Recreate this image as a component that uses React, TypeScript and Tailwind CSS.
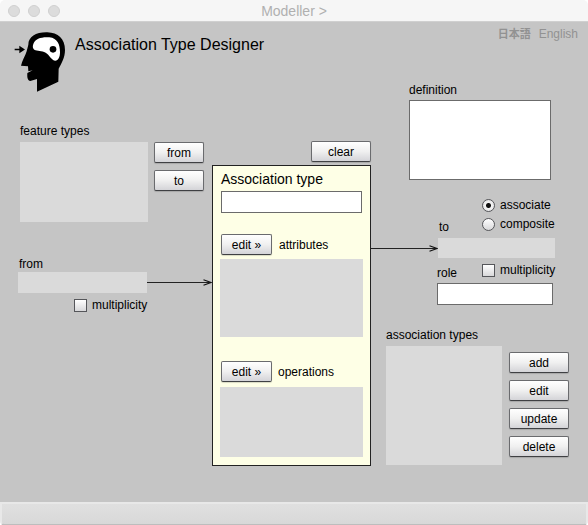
import React from "react";
import { clsx } from "clsx";

function Button({ children, className }: { children: React.ReactNode; className?: string }) {
  return (
    <button
      type="button"
      className={clsx(
        "h-[21px] shrink-0 rounded-xs border border-[#6a6b6e] border-b-[#3f4043] bg-linear-to-b from-white from-0% via-[#f0f0f0] via-50% to-[#d4d4d8] pt-px text-center leading-[18px] shadow-[0_1px_1px_rgba(0,0,0,0.15)]",
        className,
      )}
    >
      {children}
    </button>
  );
}

function ListBox({ id, className }: { id: string; className?: string }) {
  return (
    <select
      id={id}
      multiple
      disabled
      className={clsx("block min-w-0 appearance-none border-0 bg-[#dadada] p-0 opacity-100", className)}
    />
  );
}

function Choice({
  type,
  label,
  name,
  defaultChecked,
}: {
  type: "checkbox" | "radio";
  label: string;
  name?: string;
  defaultChecked?: boolean;
}) {
  return (
    <label className="flex h-4 items-center gap-[5px]">
      <input
        type={type}
        name={name}
        defaultChecked={defaultChecked}
        className={clsx(
          "size-[13px] shrink-0 appearance-none border border-[#55565a] bg-linear-to-b from-white to-[#d8d8da]",
          type === "radio" &&
            "rounded-full checked:bg-[radial-gradient(circle,#111_0,#111_2px,#f4f4f4_3px,#e4e4e6_6px)]",
          type === "checkbox" && "checked:from-[#555] checked:to-[#333]",
        )}
      />
      <span>{label}</span>
    </label>
  );
}

function Arrow({ className }: { className?: string }) {
  return (
    <div aria-hidden="true" className={clsx("flex items-center", className)}>
      <div className="h-px flex-1 bg-[#222]" />
      <svg viewBox="0 0 9 7" className="-ml-2 h-[7px] w-[9px]" fill="none" stroke="#111" strokeWidth="1.2">
        <path d="M0.5 0.7 L8 3.5 L0.5 6.3" />
      </svg>
    </div>
  );
}

function HeadLogo() {
  return (
    <svg viewBox="18 21 156 186" className="h-[62px] w-[52px] shrink-0" role="img" aria-label="Modeller">
      <path d="M61 62C61 38 85 24 118 25C150 26 171 44 171 78C171 101 160 119 152 134L151 173L87 203V165L67 171C59 169 57 162 58 147L74 139L61 142L60 127L39 125C42 110 52 96 56 82Z" />
      <path
        fill="#fff"
        d="M77 58C81 44 102 38 124 40C149 43 156 62 156 84C156 101 150 111 141 110C128 107 125 92 113 86C101 79 88 81 79 77C73 73 74 64 77 58Z"
      />
      <circle cx="135" cy="76" r="10" />
      <path d="M20 74H34V65L51 76.500L34 88V79H20Z" />
    </svg>
  );
}

function Designer() {
  return (
    <main className="grid flex-1 grid-cols-[minmax(0,212fr)_minmax(0,159fr)_minmax(0,217fr)] grid-rows-[101px_auto] content-start bg-[#c5c5c5] pb-9">
      <header className="col-span-2 flex items-start gap-[9px] pt-[9px] pl-[14px]">
        <HeadLogo />
        <h1 className="mt-1 text-base leading-5">Association Type Designer</h1>
      </header>

      <section className="col-start-1 row-start-2">
        <div className="pr-2 pl-5">
          <label htmlFor="features" className="block">feature types</label>
          <div className="mt-[3px] flex gap-[6px]">
            <ListBox id="features" className="h-20 flex-1" />
            <div className="flex flex-col gap-[7px]">
              <Button className="w-[50px]">from</Button>
              <Button className="w-[50px]">to</Button>
            </div>
          </div>
        </div>
        <div className="mt-[34px] pl-[18px]">
          <label htmlFor="from" className="block pl-px">from</label>
          <div className="flex">
            <input id="from" readOnly className="h-[21px] w-2/3 bg-[#dadada]" />
            <Arrow className="flex-1" />
          </div>
          <div className="mt-1 flex w-2/3 justify-end">
            <Choice type="checkbox" label="multiplicity" />
          </div>
        </div>
      </section>

      <section className="col-start-2 row-start-2 pt-[18px]">
        <div className="flex justify-end">
          <Button className="w-[60px]">clear</Button>
        </div>
        <div className="mt-[3px] border border-[#222] bg-[#feffe6] px-[7px] pt-[3px] pb-2">
          <div className="px-px">
            <label htmlFor="type" className="block text-sm leading-5">Association type</label>
            <input id="type" className="mt-[2px] block h-[22px] w-full border border-[#6b6b6b] bg-white px-1" />
            <div className="mt-[21px] flex items-center gap-[7px]">
              <Button className="w-[51px]">edit »</Button>
              <label htmlFor="attributes">attributes</label>
            </div>
          </div>
          <ListBox id="attributes" className="mt-1 h-[78px] w-full" />
          <div className="mt-6 flex items-center gap-[6px] px-px">
            <Button className="w-[51px]">edit »</Button>
            <label htmlFor="operations">operations</label>
          </div>
          <ListBox id="operations" className="mt-[5px] h-[70px] w-full" />
        </div>
      </section>

      <section className="col-start-3 row-span-2 row-start-1">
        <nav className="flex h-15 items-start justify-end gap-2 pt-1 pr-[10px] text-[#929292]">
          <a href="#ja" lang="ja" className="text-[11px] font-bold">日本語</a>
          <a href="#en">English</a>
        </nav>
        <div className="pr-[37px] pl-[38px]">
          <label htmlFor="definition" className="block">definition</label>
          <textarea
            id="definition"
            className="mt-[2px] block h-20 w-full resize-none border border-[#6b6b6b] bg-white p-1"
          />
        </div>

        <div className="mt-[17px] flex items-end">
          <label htmlFor="to" className="w-[111px] pl-[68px]">to</label>
          <div role="radiogroup" aria-label="kind" className="flex flex-col gap-[3px] pb-[3px]">
            <Choice type="radio" name="kind" label="associate" defaultChecked />
            <Choice type="radio" name="kind" label="composite" />
          </div>
        </div>
        <div className="mt-[3px] flex pr-[33px]">
          <Arrow className="w-[67px]" />
          <input id="to" readOnly className="h-5 min-w-0 flex-1 bg-[#dadada]" />
        </div>
        <div className="mt-1 flex h-[19px]">
          <label htmlFor="role" className="w-[111px] self-end pl-[66px]">role</label>
          <Choice type="checkbox" label="multiplicity" />
        </div>
        <div className="mt-[2px] pr-[35px] pl-[66px]">
          <input id="role" className="block h-[22px] w-full border border-[#6b6b6b] bg-white px-1" />
        </div>

        <div className="mt-[22px] pr-[19px] pl-[15px]">
          <label htmlFor="associations" className="block">association types</label>
          <div className="mt-[3px] flex gap-[7px]">
            <ListBox id="associations" className="h-[119px] flex-1" />
            <div className="flex flex-col gap-[7px] pt-[6px]">
              <Button className="w-[60px]">add</Button>
              <Button className="w-[60px]">edit</Button>
              <Button className="w-[60px]">update</Button>
              <Button className="w-[60px]">delete</Button>
            </div>
          </div>
        </div>
      </section>
    </main>
  );
}

export default function App() {
  return (
    <div className="flex min-h-screen flex-col overflow-hidden rounded-[5px] bg-[#f6f6f6] font-['Liberation_Sans','Noto_Sans_CJK_JP',sans-serif] text-xs leading-4 text-black">
      <div className="flex h-[22px] items-center border-b border-[#d0d0d0] px-2">
        <div className="flex flex-1 gap-2">
          <span className="size-3 rounded-full border border-[#cfcfcf] bg-[#dcdcdc]" />
          <span className="size-3 rounded-full border border-[#cfcfcf] bg-[#dcdcdc]" />
          <span className="size-3 rounded-full border border-[#cfcfcf] bg-[#dcdcdc]" />
        </div>
        <span className="text-sm leading-5 text-[#b0b0b0]">Modeller &gt;</span>
        <div className="flex-1" />
      </div>
      <Designer />
      <footer className="h-6 rounded-b-[4px] border-2 border-[#e8e8e8] border-b-[#bdbdbd] bg-linear-to-b from-[#e0e0e0] to-[#d8d8d8]" />
    </div>
  );
}
